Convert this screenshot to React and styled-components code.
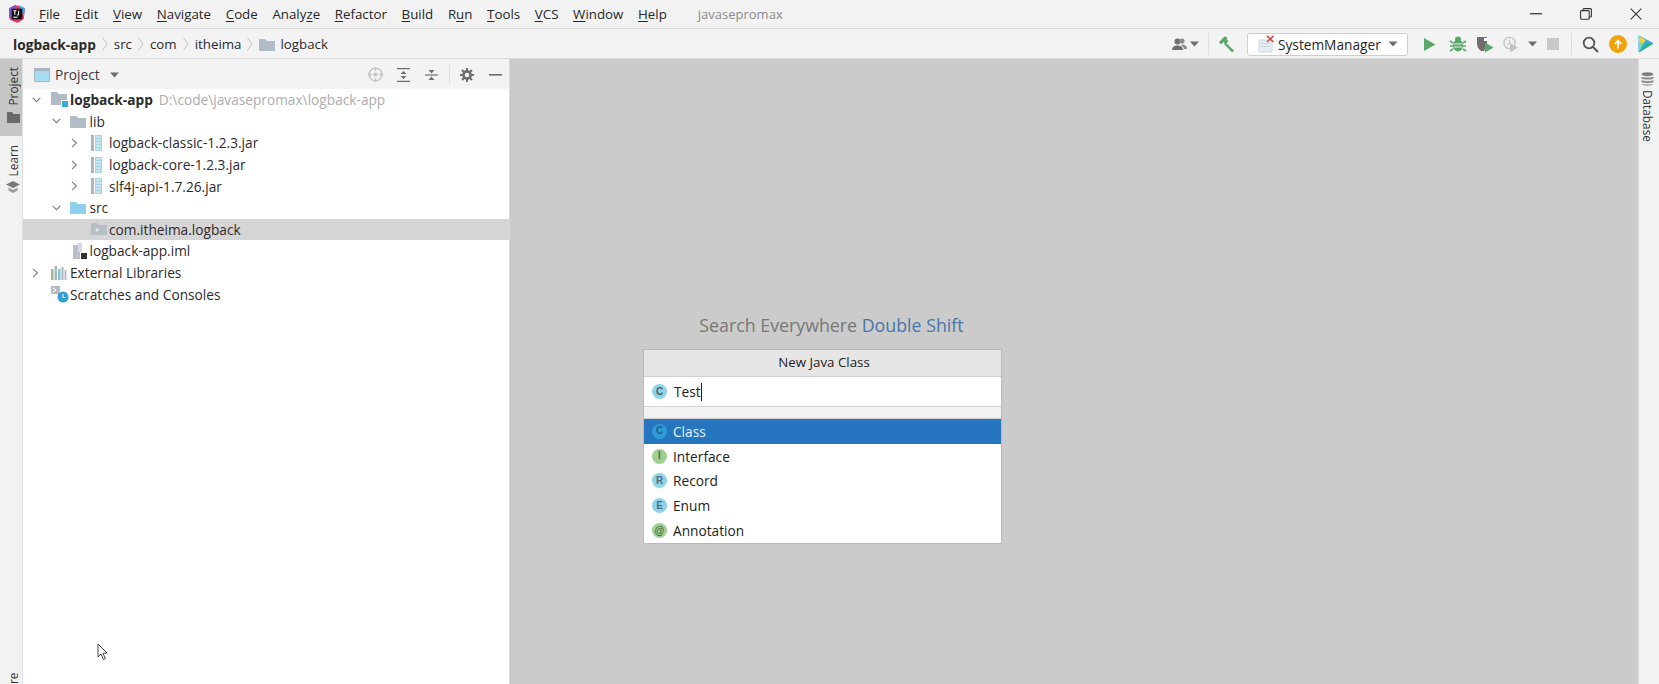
import React from "react";
import styled, { createGlobalStyle } from "styled-components";

const Global = createGlobalStyle`
  html, body { margin: 0; padding: 0; height: 100%; overflow: hidden; background: #f2f2f2; }
  #root { height: 100%; }
  * { box-sizing: border-box; }
`;
const Page = styled.div`
  width: 1659px; height: 684px; display: flex; flex-direction: column; overflow: hidden;
  font-family: "Open Sans", "Noto Sans", sans-serif; font-size: 13px; color: #222; background: #f2f2f2;
`;
const MenuBar = styled.div`
  height: 29px; flex: none; display: flex; align-items: center; padding: 0 0 1px 8px;
  border-bottom: 1px solid #d4d4d4; background: #f2f2f2;
`;
const MenuList = styled.div`
  display: flex; gap: 14.7px; margin-left: 13px; font-size: 13.3px; color: #262626;
  u { text-underline-offset: 2px; text-decoration-thickness: 1px; }
`;
const WindowTitle = styled.div`
  margin-left: 31px; font-size: 13px; color: #8a8a8a;
`;
const WindowButtons = styled.div`
  margin-left: auto; display: flex; align-items: center; gap: 38px; padding-right: 17px;
`;
const NavBar = styled.div`
  height: 30px; flex: none; display: flex; align-items: center; padding: 1px 5px 0 13px;
  border-bottom: 1px solid #dcdcdc; background: #f3f3f3;
`;
const Crumb = styled.span`
  font-size: ${p => (p.$bold ? 13.7 : 13.3)}px; color: #2a2a2a; font-weight: ${p => (p.$bold ? 700 : 400)};
`;
const CrumbSep = styled.span`
  display: flex; width: 18px; justify-content: center;
`;
const CrumbFolder = styled.span`
  display: flex; margin-right: 5px;
`;
const ToolGroup = styled.div`
  margin-left: auto; display: flex; align-items: center;
`;
const ToolSep = styled.div`
  width: 1px; height: 22px; background: #dddddd; margin: ${p => p.$m};
`;
const RunConfig = styled.div`
  width: 161px; height: 23px; margin: 0 14px 0 12px; display: flex; align-items: center; padding: 0 9px 0 10px;
  background: #fff; border: 1px solid #cfcfcf; border-radius: 3px; font-size: 13.7px; color: #262626;
  span { margin-left: 3px; flex: 1; }
`;
const ToolIcon = styled.span`
  display: flex; margin: ${p => p.$m || "0"};
`;
const Main = styled.div`
  flex: 1; display: flex; min-height: 0;
`;
const LeftStripe = styled.div`
  width: 23px; flex: none; display: flex; flex-direction: column; background: #f2f2f2;
  border-right: 1px solid #dedede;
`;
const StripeTab = styled.div`
  height: ${p => p.$h}px; display: flex; flex-direction: column; align-items: center; gap: ${p => p.$gap}px;
  padding: ${p => p.$pt}px 0 0 4px; background: ${p => (p.$active ? "#c6c6c6" : "transparent")};
`;
const VerticalText = styled.span`
  writing-mode: vertical-rl; transform: ${p => (p.$cw ? "none" : "rotate(180deg)")};
  font-size: 11.8px; line-height: 14px; color: #333;
`;
const StripeEnd = styled.div`
  margin-top: auto; display: flex; justify-content: center; height: 14px; padding-left: 4px;
`;
const ProjectPanel = styled.div`
  width: 487px; flex: none; display: flex; flex-direction: column; background: #fff;
  border-right: 1px solid #d8d8d8;
`;
const PanelHeader = styled.div`
  height: 30px; flex: none; display: flex; align-items: center; padding: 1px 7px 0 11px; background: #f3f3f3;
`;
const PanelTitle = styled.span`
  margin-left: 5px; font-size: 13.7px; color: #3c3c3c;
`;
const PanelTools = styled.div`
  margin-left: auto; display: flex; align-items: center;
`;
const PanelSep = styled.div`
  width: 1px; height: 20px; background: #e0e0e0; margin: 0 10px 0 11px;
`;
const Tree = styled.div`
  display: flex; flex-direction: column; position: relative; flex: 1;
`;
const Row = styled.div`
  height: 21.6px; display: flex; align-items: center; padding-left: ${p => 4 + p.$d * 19.5}px;
  background: ${p => (p.$sel ? "#d5d5d5" : "transparent")}; font-size: 13.7px; color: #2b2b2b; white-space: nowrap;
`;
const Chevron = styled.span`
  width: 19.5px; display: flex; padding-left: 5px; flex: none;
`;
const RowIcon = styled.span`
  width: 23.5px; display: flex; flex: none; padding-left: ${p => p.$pl ?? 0}px;
`;
const RowName = styled.span`
  font-weight: ${p => (p.$bold ? 700 : 400)};
`;
const RowPath = styled.span`
  margin-left: 6px; color: #adadad;
`;
const Cursor = styled.svg`
  position: absolute; left: 74px; bottom: 23px;
`;
const Editor = styled.div`
  flex: 1; display: flex; flex-direction: column; background: #cbcbcb; padding: 254px 0 0 133px; min-width: 0;
`;
const Stack = styled.div`
  width: 359px; display: flex; flex-direction: column; align-items: stretch;
`;
const Hint = styled.div`
  font-size: 17.8px; line-height: 24px; text-align: center; color: #777; white-space: nowrap; margin-bottom: 12px;
  padding-left: 18px;
  b { font-weight: 400; color: #4a76a8; }
`;
const Popup = styled.div`
  height: 195px; display: flex; flex-direction: column; background: #fff; border: 1px solid #b9b9b9;
`;
const PopupTitle = styled.div`
  height: 27px; flex: none; display: flex; align-items: center; justify-content: center; padding: 0 0 2px 3px;
  background: #e6e6e6; border-bottom: 1px solid #d0d0d0; font-size: 13.3px; color: #222;
`;
const PopupInput = styled.div`
  height: 30px; flex: none; display: flex; align-items: center; padding-left: 8px;
  border-bottom: 1px solid #d6d6d6; background: #fff; font-size: 13.7px; color: #222;
`;
const Caret = styled.i`
  display: inline-block; width: 1px; height: 18px; background: #222; vertical-align: middle;
`;
const InputText = styled.span`
  margin-left: 7px;
`;
const PopupGap = styled.div`
  height: 12px; flex: none; background: #f2f2f2; border-bottom: 1px solid #cfcfcf;
`;
const KindList = styled.div`
  display: flex; flex-direction: column;
`;
const KindRow = styled.div`
  height: 24.8px; display: flex; align-items: center; gap: 6px; padding-left: 8px; font-size: 13.7px;
  background: ${p => (p.$sel ? "#2675bf" : "transparent")}; color: ${p => (p.$sel ? "#eaf2fa" : "#222")};
`;
const Badge = styled.span`
  width: 15px; height: 15px; border-radius: 50%; flex: none; display: flex; align-items: center; justify-content: center;
  background: ${p => p.$bg}; color: ${p => p.$fg || "#4f5a63"}; font-size: 10px; font-weight: 700; line-height: 1;
  font-family: "Liberation Sans", sans-serif;
`;
const RightStripe = styled.div`
  width: 21px; flex: none; display: flex; flex-direction: column; align-items: center; gap: 4px; padding: 13px 3px 0 0;
  background: #f2f2f2; border-left: 1px solid #dedede;
`;

const ChevDown = () => <svg width="9" height="6" viewBox="0 0 9 6"><path d="M.7.8 4.5 4.6 8.3.8" fill="none" stroke="#7d7d7d" strokeWidth="1.1"/></svg>;
const ChevRight = () => <svg width="7" height="10" viewBox="0 0 7 10"><path d="M1 .8 5.4 5 1 9.2" fill="none" stroke="#7d7d7d" strokeWidth="1.1"/></svg>;
const Folder = ({ c = "#b1bcc7" }) => <svg width="16" height="13" viewBox="0 0 16 13"><path d="M0 1h6l2 2h8v10H0z" fill={c}/></svg>;
const ModuleFolder = () => <svg width="17" height="15" viewBox="0 0 17 15"><path d="M0 0h6l2 2h8v11H0z" fill="#b1bcc7"/><rect x="10" y="8" width="7" height="7" fill="#fff"/><rect x="11" y="9" width="6" height="6" fill="#3aa9dc"/></svg>;
const PackageFolder = () => <svg width="16" height="12" viewBox="0 0 16 12"><path d="M0 0h6l2 2h8v10H0z" fill="#b6bec6"/><circle cx="6" cy="7" r="1.6" fill="#e8ebee"/></svg>;
const Jar = () => <svg width="12" height="16" viewBox="0 0 12 16"><rect x="0" y="0" width="3" height="16" fill="#a9b4bf"/><rect x="4" y="0" width="7" height="16" fill="#a6d6e6"/><path d="M5 2h5M5 5h5M5 8h5M5 11h5M5 14h5" stroke="#e4f2f7" strokeWidth="1"/></svg>;
const Iml = () => <svg width="16" height="16" viewBox="0 0 16 16"><path d="M1 2h5l3-2v16H1z" fill="#b9c0c7"/><path d="M6 0h4v9H6z" fill="#d6dade"/><rect x="8" y="9" width="7" height="7" fill="#fff"/><rect x="9" y="10" width="6" height="6" fill="#333"/></svg>;
const Libs = () => <svg width="16" height="14" viewBox="0 0 16 14"><rect x="0" y="3" width="2.5" height="11" fill="#9fb98a"/><rect x="3.5" y="0" width="2.5" height="14" fill="#a9b4bf"/><rect x="7" y="3" width="2.5" height="11" fill="#7fc0d8"/><rect x="10.5" y="1" width="2" height="13" fill="#a9b4bf"/><rect x="13.5" y="4" width="2" height="10" fill="#b5bcc4"/></svg>;
const Scratches = () => <svg width="18" height="17" viewBox="0 0 18 17"><path d="M0 0h9v8H0z" fill="#b5bcc4"/><path d="M2 2l3 2-3 2" fill="none" stroke="#fff" strokeWidth="1"/><circle cx="12" cy="11" r="5.5" fill="#2f9fd8"/><path d="M12 8v3.5h2.5" fill="none" stroke="#fff" strokeWidth="1"/></svg>;
const Caretdown = ({ w = 9, c = "#6e6e6e" }) => <svg width={w} height="6" viewBox="0 0 9 6"><path d="M0 .5h9L4.5 5.5z" fill={c}/></svg>;

const Logo = () => (
  <svg width="18" height="18" viewBox="0 0 17 17">
    <path d="M1 3 7 0l9 3-1 10-6 4-7-3z" fill="#e8336b"/>
    <path d="M1 3 7 0 5 9 1 13z" fill="#7b57d6"/>
    <path d="M10 0l6 3-1 8z" fill="#3fa7ea"/>
    <rect x="3.5" y="3.5" width="10" height="10" fill="#111"/>
    <path d="M5 11.5h4" stroke="#fff" strokeWidth="1"/>
    <path d="M5 5.5h3M6.5 5.5V9.2M10 5.5v3.2c0 .8-1 .9-1.5.5" stroke="#fff" strokeWidth="1" fill="none"/>
  </svg>
);
const Minimize = () => <svg width="12" height="2" viewBox="0 0 12 2"><rect width="12" height="1.4" fill="#4a4a4a"/></svg>;
const Restore = () => <svg width="12" height="12" viewBox="0 0 12 12"><rect x=".6" y="2.6" width="8.6" height="8.6" rx="1" fill="none" stroke="#333" strokeWidth="1.1"/><path d="M3 2.5V1.6q0-1 1-1h6.4q1 0 1 1V8q0 1-1 1H9.4" fill="none" stroke="#333" strokeWidth="1.1"/></svg>;
const CloseX = () => <svg width="12" height="12" viewBox="0 0 12 12"><path d="M.7.7 11.3 11.3M11.3.7.7 11.3" stroke="#333" strokeWidth="1.1"/></svg>;
const CrumbArrow = () => <svg width="6" height="14" viewBox="0 0 6 14"><path d="M.5.5 5 7 .5 13.5" fill="none" stroke="#c4c4c4" strokeWidth="1"/></svg>;
const User = () => <svg width="15" height="13" viewBox="0 0 15 13"><circle cx="5.5" cy="3.4" r="3" fill="#6e6e6e"/><path d="M0 12c0-3.5 3-4.6 5.5-4.6S11 8.5 11 12z" fill="#6e6e6e"/><circle cx="10" cy="3" r="2.6" fill="#8c8c8c"/><path d="M10 6.6c2.5 0 5 1 5 4.4h-3.2c-.3-1.8-1.2-3.2-2.8-3.6z" fill="#8c8c8c"/></svg>;
const Hammer = () => <svg width="17" height="17" viewBox="0 0 17 17"><path d="M7.5 6.5 16 14.5l-1.8 2-8.2-8.4z" fill="#59a869"/><path d="M1 6 6.5.5l3 1-1 1.5 2 2-3 3-2-2-2.5 2.5z" fill="#59a869"/></svg>;
const ConfigIcon = () => <svg width="17" height="18" viewBox="0 0 17 18"><rect x="1" y="5" width="13" height="12" fill="#e4edf3" stroke="#cdd8e0"/><rect x="3" y="8" width="9" height="1" fill="#c8d6e0"/><rect x="3" y="11" width="9" height="1" fill="#c8d6e0"/><path d="M9 .8 15.5 7M15.5.8 9 7" stroke="#e04a4a" strokeWidth="1.6"/></svg>;
const Play = () => <svg width="12" height="13" viewBox="0 0 12 13"><path d="M0 0 11.5 6.5 0 13z" fill="#59a869"/></svg>;
const Bug = () => <svg width="18" height="16" viewBox="0 0 18 16"><ellipse cx="9" cy="9.5" rx="5" ry="6" fill="#59a869"/><circle cx="9" cy="3.5" r="3" fill="#59a869"/><path d="M1 5l3 2M17 5l-3 2M1 10h3M17 10h-3M1 15l3-2M17 15l-3-2" stroke="#59a869" strokeWidth="1.6"/><path d="M5 8h8M5 11h8" stroke="#e8f2ea" strokeWidth="1"/></svg>;
const Coverage = () => <svg width="17" height="17" viewBox="0 0 17 17"><path d="M0 1h10v8l-3 6-3 0C1 13 0 10 0 7z" fill="#6e6e6e"/><path d="M7 2h3v3H7z" fill="#fff"/><path d="M8 6.5 16.5 11.5 8 16.5z" fill="#59a869"/></svg>;
const Profiler = () => <svg width="15" height="17" viewBox="0 0 15 17"><circle cx="6.5" cy="7" r="5.6" fill="none" stroke="#c2c2c2" strokeWidth="1.4"/><path d="M6.5 3.5V7l-2 2" fill="none" stroke="#c2c2c2" strokeWidth="1.2"/><path d="M7 7 15 11.5 7 16.5z" fill="#c2c2c2"/></svg>;
const Stop = () => <svg width="12" height="12" viewBox="0 0 12 12"><rect width="12" height="12" fill="#c8c8c8"/></svg>;
const Search = () => <svg width="17" height="17" viewBox="0 0 17 17"><circle cx="7" cy="7" r="5.3" fill="none" stroke="#555" strokeWidth="1.8"/><path d="M11 11l5 5" stroke="#555" strokeWidth="2"/></svg>;
const Upgrade = () => <svg width="18" height="18" viewBox="0 0 18 18"><circle cx="9" cy="9" r="9" fill="#f0a30a"/><path d="M9 13.5V6M5.8 9 9 5.5 12.2 9" fill="none" stroke="#fff" strokeWidth="1.8"/></svg>;
const Bird = () => <svg width="16" height="18" viewBox="0 0 16 18"><path d="M1 1 15 8.5 1 17z" fill="#2fa9e0" stroke="#2fa9e0" strokeLinejoin="round"/><path d="M1 1 8 5 5 9 1 7z" fill="#f2d33c"/><path d="M1 17 9 9l6-.5z" fill="#28b66d"/><path d="M1 7l4 2-4 8z" fill="#7fdca0"/></svg>;
const ProjectIcon = () => <svg width="16" height="14" viewBox="0 0 16 14"><rect width="16" height="14" fill="#a9b4bf"/><rect x="1" y="3" width="14" height="10" fill="#a8dcf0"/></svg>;
const Crosshair = () => <svg width="15" height="15" viewBox="0 0 15 15"><circle cx="7.5" cy="7.5" r="6.4" fill="none" stroke="#c4c4c4" strokeWidth="1.4"/><circle cx="7.5" cy="7.5" r="2" fill="#c4c4c4"/><path d="M7.5 0v4M7.5 11v4M0 7.5h4M11 7.5h4" stroke="#c4c4c4" strokeWidth="1.3"/></svg>;
const Expand = () => <svg width="13" height="14" viewBox="0 0 13 14"><path d="M0 .7h13M0 13.3h13" stroke="#6e6e6e" strokeWidth="1.2"/><path d="M6.5 3 9.5 6h-6zM6.5 11 9.5 8h-6z" fill="#6e6e6e"/></svg>;
const Collapse = () => <svg width="13" height="14" viewBox="0 0 13 14"><path d="M0 7h13" stroke="#6e6e6e" strokeWidth="1.2"/><path d="M6.5 5.5 9.5 2h-6zM6.5 8.5 9.5 12h-6z" fill="#6e6e6e"/></svg>;
const Gear = () => <svg width="14" height="14" viewBox="0 0 14 14"><circle cx="7" cy="7" r="3.6" fill="none" stroke="#6e6e6e" strokeWidth="2.6"/><path d="M7 0v3M7 11v3M0 7h3M11 7h3M2 2l2 2M10 10l2 2M12 2l-2 2M4 10l-2 2" stroke="#6e6e6e" strokeWidth="2"/></svg>;
const Dash = () => <svg width="13" height="2" viewBox="0 0 13 2"><rect width="13" height="1.6" fill="#6e6e6e"/></svg>;
const StripeFolder = () => <svg width="13" height="11" viewBox="0 0 13 11"><path d="M0 0h5l1.5 2H13v9H0z" fill="#6a6a6a"/></svg>;
const Cap = () => <svg width="14" height="12" viewBox="0 0 14 12"><path d="M7 0 14 3.5 7 7 0 3.5z" fill="#7a7a7a"/><path d="M2.5 6.5v3L7 12l4.5-2.5v-3L7 9z" fill="#9a9a9a"/></svg>;
const Database = () => <svg width="13" height="14" viewBox="0 0 13 14"><ellipse cx="6.5" cy="2.2" rx="6" ry="2" fill="#7d7d7d"/><path d="M.5 4.4c1 1.4 11 1.4 12 0v2c-1 1.5-11 1.5-12 0zM.5 8c1 1.4 11 1.4 12 0v2c-1 1.5-11 1.5-12 0zM.5 11.4c1 1.3 11 1.3 12 0v.4c-1 2.6-11 2.6-12 0z" fill="#8c8c8c"/></svg>;

const menus = [["F","ile"],["E","dit"],["V","iew"],["N","avigate"],["C","ode"],["Analy","ze","u"],["R","efactor"],["B","uild"],["R","un","u2"],["T","ools"],["VCS",""],["W","indow"],["H","elp"]];

const tree = [
  { d: 0, open: true, icon: <ModuleFolder />, name: "logback-app", bold: true, path: "D:\\code\\javasepromax\\logback-app", pl: 4 },
  { d: 1, open: true, icon: <Folder />, name: "lib", pl: 4 },
  { d: 2, open: false, icon: <Jar />, name: "logback-classic-1.2.3.jar", pl: 5 },
  { d: 2, open: false, icon: <Jar />, name: "logback-core-1.2.3.jar", pl: 5 },
  { d: 2, open: false, icon: <Jar />, name: "slf4j-api-1.7.26.jar", pl: 5 },
  { d: 1, open: true, icon: <Folder c="#8fd0ee" />, name: "src", pl: 4 },
  { d: 2, icon: <PackageFolder />, name: "com.itheima.logback", sel: true, pl: 5 },
  { d: 1, icon: <Iml />, name: "logback-app.iml", pl: 6 },
  { d: 0, open: false, icon: <Libs />, name: "External Libraries", pl: 4 },
  { d: 0, icon: <Scratches />, name: "Scratches and Consoles", pl: 4 },
];

const kinds = [
  { name: "Class", l: "C", bg: "#2e9bd6", fg: "#1d5f8c", sel: true },
  { name: "Interface", l: "I", bg: "#9fcf8f", fg: "#4d6b48" },
  { name: "Record", l: "R", bg: "#8fd3ea", fg: "#4f6c80" },
  { name: "Enum", l: "E", bg: "#8fd3ea", fg: "#4f6c80" },
  { name: "Annotation", l: "@", bg: "#9fcf8f", fg: "#4d6b48" },
];

const MenuItem = ({ m }) => {
  if (m[2] === "u") return <span>Analy<u>z</u>e</span>;
  if (m[2] === "u2") return <span>R<u>u</u>n</span>;
  if (!m[1]) return <span><u>V</u>CS</span>;
  return <span><u>{m[0]}</u>{m[1]}</span>;
};

export default function App() {
  return (
    <Page>
      <Global />
      <MenuBar>
        <Logo />
        <MenuList>{menus.map((m, i) => <MenuItem key={i} m={m} />)}</MenuList>
        <WindowTitle>javasepromax</WindowTitle>
        <WindowButtons><Minimize /><Restore /><CloseX /></WindowButtons>
      </MenuBar>
      <NavBar>
        <Crumb $bold>logback-app</Crumb><CrumbSep><CrumbArrow /></CrumbSep>
        <Crumb>src</Crumb><CrumbSep><CrumbArrow /></CrumbSep>
        <Crumb>com</Crumb><CrumbSep><CrumbArrow /></CrumbSep>
        <Crumb>itheima</Crumb><CrumbSep><CrumbArrow /></CrumbSep>
        <CrumbFolder><Folder /></CrumbFolder>
        <Crumb>logback</Crumb>
        <ToolGroup>
          <User /><ToolIcon $m="0 0 0 3px"><Caretdown /></ToolIcon>
          <ToolSep $m="0 9px 0 9px" />
          <Hammer />
          <RunConfig><ConfigIcon /><span>SystemManager</span><Caretdown w={10} /></RunConfig>
          <ToolIcon $m="0 0 0 2px"><Play /></ToolIcon>
          <ToolIcon $m="0 0 0 13px"><Bug /></ToolIcon>
          <ToolIcon $m="0 0 0 10px"><Coverage /></ToolIcon>
          <ToolIcon $m="0 0 0 9px"><Profiler /></ToolIcon>
          <ToolIcon $m="0 0 0 10px"><Caretdown /></ToolIcon>
          <ToolIcon $m="0 0 0 10px"><Stop /></ToolIcon>
          <ToolSep $m="0 10px 0 12px" />
          <Search />
          <ToolIcon $m="0 0 0 10px"><Upgrade /></ToolIcon>
          <ToolIcon $m="0 0 0 11px"><Bird /></ToolIcon>
        </ToolGroup>
      </NavBar>
      <Main>
        <LeftStripe>
          <StripeTab $h={77} $pt={8} $gap={7} $active><VerticalText>Project</VerticalText><StripeFolder /></StripeTab>
          <StripeTab $h={70} $pt={9} $gap={5}><VerticalText>Learn</VerticalText><Cap /></StripeTab>
          <StripeEnd><VerticalText>re</VerticalText></StripeEnd>
        </LeftStripe>
        <ProjectPanel>
          <PanelHeader>
            <ProjectIcon /><PanelTitle>Project</PanelTitle>
            <ToolIcon $m="0 0 0 10px"><Caretdown /></ToolIcon>
            <PanelTools>
              <Crosshair />
              <ToolIcon $m="0 15px 0 14px"><Expand /></ToolIcon>
              <Collapse />
              <PanelSep />
              <Gear />
              <ToolIcon $m="0 0 0 15px"><Dash /></ToolIcon>
            </PanelTools>
          </PanelHeader>
          <Tree>
            {tree.map(r => (
              <Row key={r.name} $d={r.d} $sel={r.sel}>
                <Chevron>{r.open === true ? <ChevDown /> : r.open === false ? <ChevRight /> : null}</Chevron>
                <RowIcon $pl={r.pl}>{r.icon}</RowIcon>
                <RowName $bold={r.bold}>{r.name}</RowName>
                {r.path && <RowPath>{r.path}</RowPath>}
              </Row>
            ))}
            <Cursor width="12" height="18" viewBox="0 0 12 18"><path d="M1 1v13l3-3 2.4 5.5 2-.9L6 10.2h4.2z" fill="#fff" stroke="#444" strokeWidth="1"/></Cursor>
          </Tree>
        </ProjectPanel>
        <Editor>
          <Stack>
            <Hint>Search Everywhere <b>Double Shift</b></Hint>
            <Popup>
              <PopupTitle>New Java Class</PopupTitle>
              <PopupInput>
                <Badge $bg="#8fd3ea">C</Badge>
                <InputText>Test</InputText><Caret />
              </PopupInput>
              <PopupGap />
              <KindList>
                {kinds.map(k => (
                  <KindRow key={k.name} $sel={k.sel}>
                    <Badge $bg={k.bg} $fg={k.fg}>{k.l}</Badge>{k.name}
                  </KindRow>
                ))}
              </KindList>
            </Popup>
          </Stack>
        </Editor>
        <RightStripe><Database /><VerticalText $cw>Database</VerticalText></RightStripe>
      </Main>
    </Page>
  );
}
